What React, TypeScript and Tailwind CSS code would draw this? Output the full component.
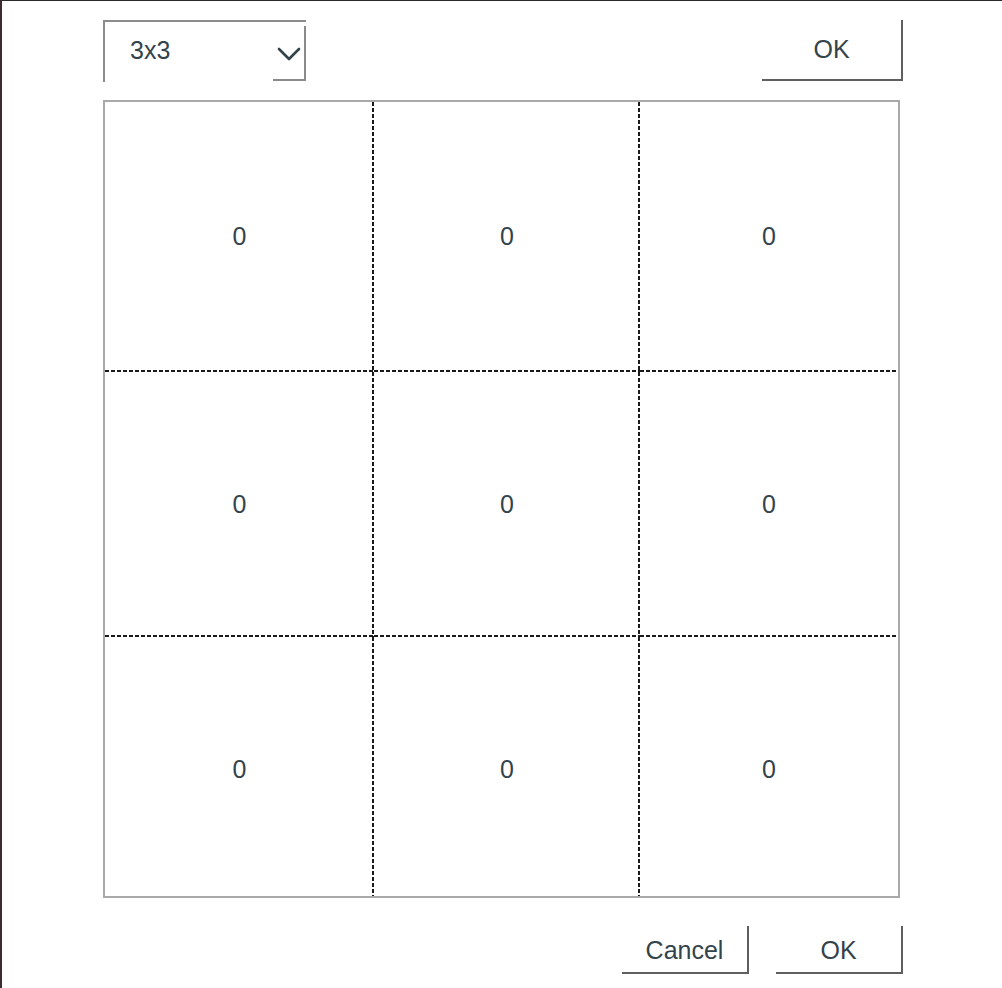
import React from "react";

const font = { fontFamily: '"Liberation Sans", Arial, sans-serif' };

const cellBase = "flex items-center justify-center bg-no-repeat";
const cellBoth =
  cellBase +
  " pb-[1px] bg-[repeating-linear-gradient(to_bottom,#1a1a1a_0_4px,transparent_4px_6px),repeating-linear-gradient(to_right,#1a1a1a_0_4px,transparent_4px_6px)] [background-size:2px_100%,100%_2px] [background-position:right_top,left_bottom]";
const cellRight =
  cellBase +
  " pt-[6px] bg-[repeating-linear-gradient(to_bottom,#1a1a1a_0_4px,transparent_4px_6px)] [background-size:2px_100%] [background-position:right_top]";
const cellBottom =
  cellBase +
  " pb-[1px] bg-[repeating-linear-gradient(to_right,#1a1a1a_0_4px,transparent_4px_6px)] [background-size:100%_2px] [background-position:left_bottom]";
const cellPlain = cellBase + " pt-[6px]";

function Cell({ right, bottom }: { right: boolean; bottom: boolean }) {
  const cls = right && bottom ? cellBoth : right ? cellRight : bottom ? cellBottom : cellPlain;
  return (
    <div className={cls}>
      <span className="text-[25px] leading-none text-[#33434b]">0</span>
    </div>
  );
}

export default function App() {
  const cells = [];
  for (let r = 0; r < 3; r++) {
    for (let c = 0; c < 3; c++) {
      cells.push(<Cell key={`${r}-${c}`} right={c < 2} bottom={r < 2} />);
    }
  }
  return (
    <div
      className="w-[1002px] h-[988px] bg-white border-t border-t-[#2a2a2a] border-l-2 border-l-[#3b2b33] overflow-hidden"
      style={font}
    >
      <div className="ml-[101px] mt-[19px] w-[800px] flex flex-col">
        {/* top row */}
        <div className="flex justify-between items-start">
          <div className="w-[203px] h-[62px] border-t-2 border-l-2 border-[#8c8c8c] flex items-stretch">
            <div className="flex-1 flex items-center pl-[25px] pb-[4px] text-[25px] leading-none text-[#33434b]">
              3x3
            </div>
            <div className="mt-[4px] mb-[1px] w-[33px] border-r-2 border-b-2 border-[#8a8a8a] flex items-center justify-center pt-[3px]">
              <svg width="24" height="16" viewBox="0 0 24 16">
                <polyline
                  points="2,3 12,13 22,3"
                  fill="none"
                  stroke="#33434b"
                  strokeWidth="2.6"
                  strokeLinecap="round"
                  strokeLinejoin="round"
                />
              </svg>
            </div>
          </div>
          <button className="w-[141px] h-[61px] border-r-2 border-b-2 border-[#5f5f5f] flex items-center justify-center text-[25px] leading-none text-[#33434b]">
            OK
          </button>
        </div>

        {/* grid */}
        <div className="mt-[18px] w-[797px] border-2 border-[#a9a9a9] grid grid-cols-[269px_266px_258px] grid-rows-[270px_265px_259px]">
          {cells}
        </div>

        {/* bottom row */}
        <div className="mt-[28px] flex justify-end gap-[27px]">
          <button className="w-[127px] h-[48px] border-r-2 border-b-2 border-[#5f5f5f] flex items-center justify-center pt-[3px] text-[25px] leading-none text-[#33434b]">
            Cancel
          </button>
          <button className="w-[127px] h-[48px] border-r-2 border-b-2 border-[#5f5f5f] flex items-center justify-center pt-[3px] text-[25px] leading-none text-[#33434b]">
            OK
          </button>
        </div>
      </div>
    </div>
  );
}
